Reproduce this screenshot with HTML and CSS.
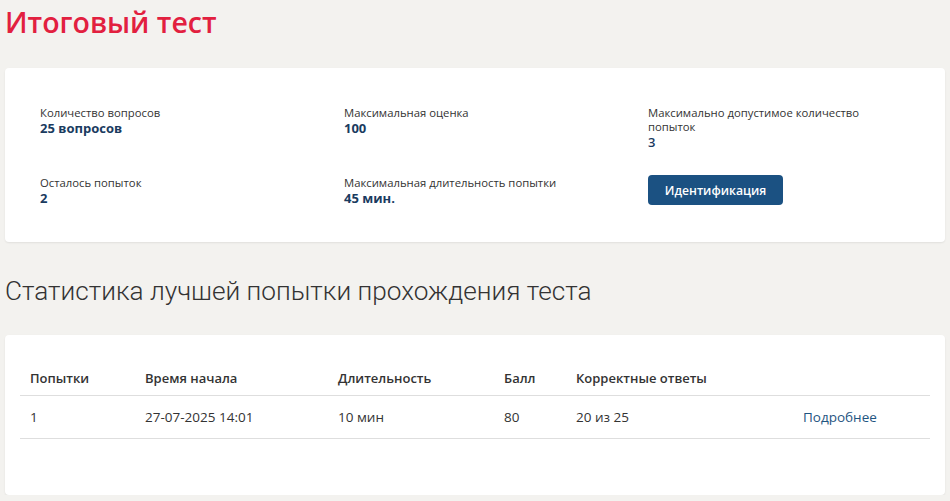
FILE: index.html
```html
<!DOCTYPE html>
<html lang="ru">
<head>
<meta charset="utf-8">
<title>Итоговый тест</title>
<link rel="stylesheet" href="styles.css">
</head>
<body>
<div class="page">
  <h1 class="title">Итоговый тест</h1>
  <section class="card info">
    <div class="info-grid">
      <div class="item">
        <div class="label">Количество вопросов</div>
        <div class="value">25 вопросов</div>
      </div>
      <div class="item">
        <div class="label">Максимальная оценка</div>
        <div class="value">100</div>
      </div>
      <div class="item narrow">
        <div class="label">Максимально допустимое количество попыток</div>
        <div class="value plain">3</div>
      </div>
      <div class="item">
        <div class="label">Осталось попыток</div>
        <div class="value">2</div>
      </div>
      <div class="item">
        <div class="label">Максимальная длительность попытки</div>
        <div class="value">45 мин.</div>
      </div>
      <div class="item">
        <button class="btn">Идентификация</button>
      </div>
    </div>
  </section>
  <h2 class="subtitle">Статистика лучшей попытки прохождения теста</h2>
  <section class="card stats">
    <table class="table">
      <thead>
        <tr>
          <th class="c1">Попытки</th>
          <th class="c2">Время начала</th>
          <th class="c3">Длительность</th>
          <th class="c4">Балл</th>
          <th class="c5">Корректные ответы</th>
          <th class="c6"></th>
        </tr>
      </thead>
      <tbody>
        <tr>
          <td>1</td>
          <td>27-07-2025 14:01</td>
          <td>10 мин</td>
          <td>80</td>
          <td>20 из 25</td>
          <td><a class="link" href="#">Подробнее</a></td>
        </tr>
      </tbody>
    </table>
  </section>
</div>
</body>
</html>
```
FILE: styles.css
```css
* { box-sizing: border-box; }
html, body { margin: 0; padding: 0; }
body {
  background: #f3f2ef;
  font-family: "Open Sans", "Noto Sans", sans-serif;
  color: #333;
}
.page { padding: 0 5px; }
.title {
  margin: 0;
  padding-top: 3px;
  height: 68px;
  font-size: 28.5px;
  font-weight: 600;
  color: #e2203f;
  line-height: 38px;
}
.card {
  background: #fff;
  border-radius: 4px;
  box-shadow: 0 1px 2px rgba(0,0,0,0.08);
}
.info {
  height: 174px;
  padding: 38px 35px 0 35px;
}
.info-grid {
  display: grid;
  grid-template-columns: 304px 304px 1fr;
  grid-template-rows: 70px auto;
}
.item.narrow { max-width: 230px; }
.label {
  font-size: 11.3px;
  line-height: 14px;
  color: #333;
}
.value {
  font-size: 13px;
  font-weight: 700;
  line-height: 16px;
  color: #1a3b5f;
}
.value.plain { font-weight: 600; }
.btn {
  font-family: inherit;
  font-size: 12.2px;
  font-weight: 600;
  color: #fff;
  background: #1b5182;
  border: 0;
  border-radius: 4px;
  width: 135px;
  height: 30px;
  padding: 0;
  margin-top: -1px;
}
.subtitle {
  margin: 0;
  height: 93px;
  padding-top: 32px;
  font-family: Roboto, "Open Sans", sans-serif;
  font-weight: 300;
  font-size: 26.2px;
  line-height: 34px;
  color: #333;
}
.stats {
  height: 160px;
  padding: 29px 15px 0 15px;
}
.table {
  width: 100%;
  border-collapse: collapse;
  font-size: 13.5px;
}
.table th {
  text-align: left;
  font-size: 13px;
  font-weight: 600;
  color: #333;
  padding: 0 10px 3px 10px;
  height: 31px;
  border-bottom: 1px solid #dedede;
  vertical-align: middle;
}
.table td {
  padding: 0 10px;
  height: 43px;
  border-bottom: 1px solid #dedede;
  color: #333;
}
.c1 { width: 115px; }
.c2 { width: 193px; }
.c3 { width: 166px; }
.c4 { width: 72px; }
.c5 { width: 227px; }
.link { color: #1f5581; text-decoration: none; }
```
